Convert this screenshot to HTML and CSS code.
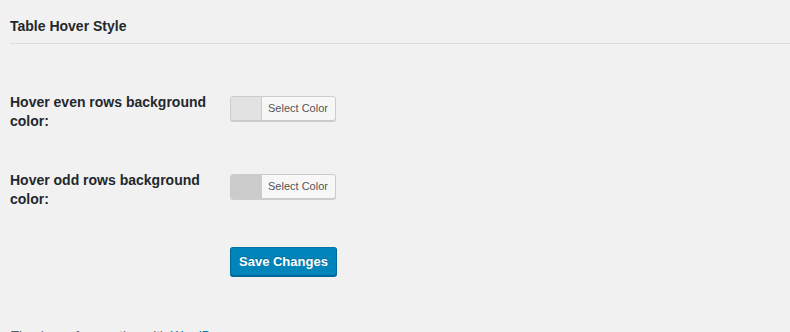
FILE: index.html
```html
<!DOCTYPE html>
<html lang="en">
<head>
    <meta charset="UTF-8">
    <meta name="viewport" content="width=device-width, initial-scale=1.0">
    <title>Table Hover Style</title>
    <link rel="stylesheet" href="styles.css">
</head>
<body>
    <div class="wrap">
        <h2 class="section-title">Table Hover Style</h2>

        <form class="settings">
            <table class="form-table">
                <tr>
                    <th>Hover even rows background color:</th>
                    <td>
                        <button type="button" class="color-result">
                            <span class="swatch swatch-even"></span>
                            <span class="color-label">Select Color</span>
                        </button>
                    </td>
                </tr>
                <tr>
                    <th>Hover odd rows background color:</th>
                    <td>
                        <button type="button" class="color-result">
                            <span class="swatch swatch-odd"></span>
                            <span class="color-label">Select Color</span>
                        </button>
                    </td>
                </tr>
            </table>

            <p class="submit">
                <button type="submit" class="button-primary">Save Changes</button>
            </p>
        </form>

        <div class="footer">
            <span class="thankyou">Thank you for creating with <a href="#">WordPress</a>.</span>
        </div>
    </div>
</body>
</html>
```

FILE: styles.css
```css
body {
    margin: 0;
    background: #f1f1f1;
    color: #23282d;
    font-family: "Liberation Sans", Arial, sans-serif;
    font-size: 13px;
}
.wrap {
    padding-left: 10px;
}
.section-title {
    margin: 0;
    padding: 17px 0 8px;
    font-size: 14px;
    line-height: 18px;
    font-weight: bold;
    border-bottom: 1px solid #dcdcdc;
}
.settings {
    margin: 0;
}
.form-table {
    border-collapse: collapse;
    margin-top: 29px;
}
.form-table th {
    width: 200px;
    padding: 20px 10px 20px 0;
    text-align: left;
    vertical-align: top;
    font-size: 14px;
    line-height: 19px;
    font-weight: bold;
}
.form-table td {
    padding: 23px 10px 0;
    vertical-align: top;
}
.color-result {
    display: flex;
    height: 25px;
    padding: 0;
    margin: 0;
    border: 1px solid #ccc;
    border-radius: 3px;
    box-shadow: 0 1px 0 #ccc;
    background: #f7f7f7;
    overflow: hidden;
    cursor: pointer;
}
.swatch {
    width: 30px;
    height: 100%;
    border-right: 1px solid #ccc;
}
.swatch-even {
    background: #e2e2e2;
}
.swatch-odd {
    background: #cbcbcb;
}
.color-label {
    padding: 0 7px 0 6px;
    line-height: 23px;
    font-family: "Liberation Sans", Arial, sans-serif;
    font-size: 11px;
    color: #555;
}
.submit {
    margin: 0;
    padding: 18px 0 0 220px;
}
.button-primary {
    height: 29px;
    padding: 0 8px;
    background: #0085ba;
    border: 1px solid #0073aa;
    border-color: #0073aa #006799 #006799;
    border-radius: 3px;
    box-shadow: 0 1px 0 #006799;
    color: #fff;
    font-family: "Liberation Sans", Arial, sans-serif;
    font-size: 13px;
    font-weight: bold;
    text-shadow: 0 -1px 1px #006799;
    cursor: pointer;
}
.footer {
    padding-top: 52px;
    color: #555d66;
    font-style: italic;
    font-size: 13px;
}
.footer a {
    color: #0073aa;
    text-decoration: underline;
}
```
